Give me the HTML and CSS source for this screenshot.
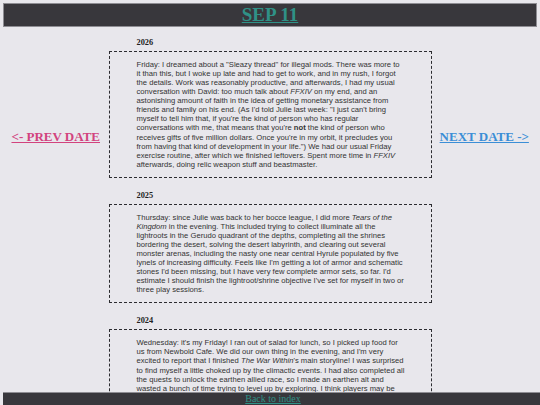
FILE: index.html
```html
<!DOCTYPE html>
<html lang="en">
<head>
  <meta charset="UTF-8" />
  <meta name="viewport" content="width=device-width, initial-scale=1.0"/>
  <title>Sep 11 | Journal</title>
  <link rel="stylesheet" href="styles.css">
</head>
<body>

  <header class="top-bar">
    <h1><a href="#" class="day-title">SEP 11</a></h1>
  </header>

  <main class="day-layout">
    <nav class="side-nav">
      <a href="#" class="prev-link">&lt;- PREV DATE</a>
    </nav>

    <section class="entries">
      <article class="entry">
        <h2 class="entry-year">2026</h2>
        <div class="entry-body">
          <p>Friday: I dreamed about a "Sleazy thread" for illegal mods. There was more to it than this, but I woke up late and had to get to work, and in my rush, I forgot the details. Work was reasonably productive, and afterwards, I had my usual conversation with David: too much talk about <i>FFXIV</i> on my end, and an astonishing amount of faith in the idea of getting monetary assistance from friends and family on his end. (As I'd told Julie last week: "I just can't bring myself to tell him that, if you're the kind of person who has regular conversations with me, that means that you're <b>not</b> the kind of person who receives gifts of five million dollars. Once you're in my orbit, it precludes you from having that kind of development in your life.") We had our usual Friday exercise routine, after which we finished leftovers. Spent more time in <i>FFXIV</i> afterwards, doing relic weapon stuff and beastmaster.</p>
        </div>
      </article>

      <article class="entry">
        <h2 class="entry-year">2025</h2>
        <div class="entry-body">
          <p>Thursday: since Julie was back to her bocce league, I did more <i>Tears of the Kingdom</i> in the evening. This included trying to collect illuminate all the lightroots in the Gerudo quadrant of the depths, completing all the shrines bordering the desert, solving the desert labyrinth, and clearing out several monster arenas, including the nasty one near central Hyrule populated by five lynels of increasing difficulty. Feels like I'm getting a lot of armor and schematic stones I'd been missing, but I have very few complete armor sets, so far. I'd estimate I should finish the lightroot/shrine objective I've set for myself in two or three play sessions.</p>
        </div>
      </article>

      <article class="entry">
        <h2 class="entry-year">2024</h2>
        <div class="entry-body">
          <p>Wednesday: it's my Friday! I ran out of salad for lunch, so I picked up food for us from Newbold Cafe. We did our own thing in the evening, and I'm very excited to report that I finished <i>The War Within</i>'s main storyline! I was surprised to find myself a little choked up by the climactic events. I had also completed all the quests to unlock the earthen allied race, so I made an earthen alt and wasted a bunch of time trying to level up by exploring. I think players may be better off sticking to dungeons for that.</p>
        </div>
      </article>
    </section>

    <nav class="side-nav">
      <a href="#" class="next-link">NEXT DATE -&gt;</a>
    </nav>
  </main>

  <footer class="bottom-bar">
    <a href="#">Back to index</a>
  </footer>

</body>
</html>
```

FILE: styles.css
```css
body {
  margin: 3px;
  font-family: 'Liberation Serif', 'Times New Roman', serif;
  background-color: #e8e7ec;
  color: #222;
}

.top-bar {
  background-color: #38373c;
  border: 1px solid #8e8d93;
  text-align: center;
}

.top-bar h1 {
  margin: 0;
  font-size: 19px;
  line-height: 22px;
}

.day-title {
  color: #2f9187;
}

.day-layout {
  display: grid;
  grid-template-columns: 1fr 323px 1fr;
  padding-bottom: 20px;
}

.side-nav {
  text-align: center;
  padding-top: 100px;
}

.side-nav a {
  font-size: 13px;
  font-weight: bold;
  line-height: 15px;
}

.prev-link {
  color: #d2437e;
}

.next-link {
  color: #3b8ed6;
}

.entry {
  margin-top: 13px;
}

.entry:first-child {
  margin-top: 11px;
}

.entry-year {
  margin: 0 0 3px 28px;
  font-size: 8.3px;
  line-height: 10px;
  color: #222;
}

.entry-body {
  border: 1.5px dashed #2c2c30;
  padding: 8px 0 8px 27px;
}

.entry-body p {
  width: 268.5px;
  margin: 0;
  font-family: 'Liberation Sans', Arial, sans-serif;
  font-size: 7.65px;
  line-height: 9.06px;
  color: #333;
}

.bottom-bar {
  position: fixed;
  left: 3px;
  bottom: 0;
  width: 100%;
  height: 12px;
  background-color: #38373c;
  border-top: 1px solid #8e8d93;
  text-align: center;
  font-size: 10px;
  line-height: 12px;
}

.bottom-bar a {
  color: #2f9187;
}
```
